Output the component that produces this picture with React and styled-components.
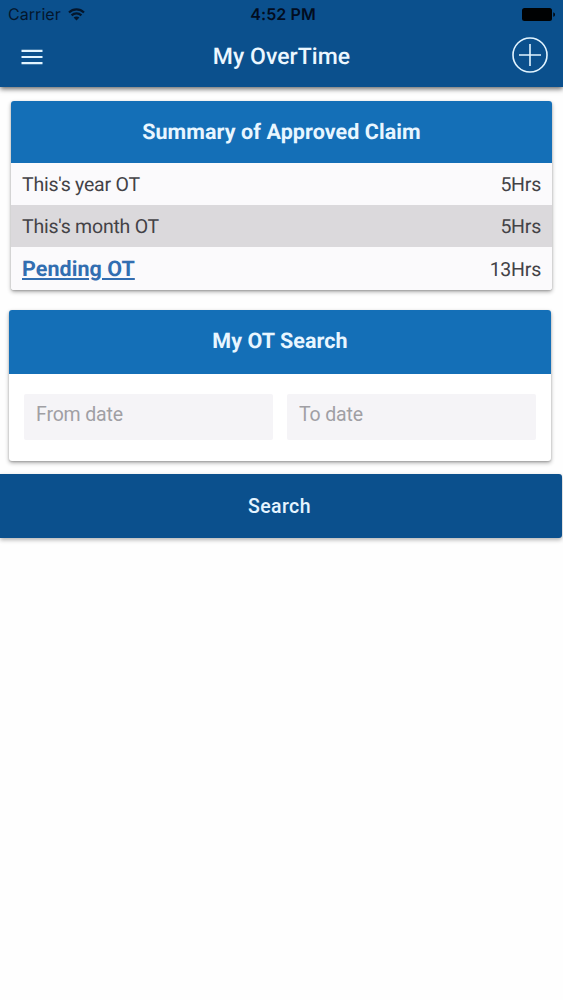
import React from "react";
import styled, { createGlobalStyle } from "styled-components";

const GlobalStyle = createGlobalStyle`
  * { box-sizing: border-box; }
  body { margin: 0; background: #fefefe; font-family: Roboto, sans-serif; text-rendering: geometricPrecision; }
  #root { min-height: 1000px; }
`;

const Screen = styled.div`
  width: 563px;
  min-height: 1000px;
  background: #fefefe;
  overflow: hidden;
`;

const Header = styled.header`
  height: 87px;
  background: #0b508d;
  box-shadow: 0 2px 5px rgba(0, 0, 0, 0.6);
`;

const StatusBar = styled.div`
  display: grid;
  grid-template-columns: 1fr auto 1fr;
  align-items: center;
  height: 28px;
  padding: 0 7px 0 8px;
  color: #04162c;
  font: 400 16px/28px Inter, sans-serif;
`;

const Carrier = styled.div`
  display: flex;
  align-items: center;
  gap: 7px;
  letter-spacing: 0.05px;
`;

const Clock = styled.div`
  padding-left: 2px;
  font-weight: 600;
  letter-spacing: 0.1px;
  color: #020d1f;
`;

const BatterySlot = styled.div`
  display: flex;
  justify-content: flex-end;
`;

const Toolbar = styled.div`
  display: grid;
  grid-template-columns: 100px 1fr 100px;
  align-items: center;
  height: 56px;
  padding: 0 15px 0 21px;
`;

const IconButton = styled.button`
  display: flex;
  padding: ${(p) => (p.$end ? "0 0 3px" : "2px 0 0")};
  border: 0;
  background: none;
  color: #e2f4ff;
  justify-self: ${(p) => (p.$end ? "end" : "start")};
`;

const Title = styled.h1`
  margin: 0;
  padding: 2px 6px 0 0;
  text-align: center;
  white-space: nowrap;
  color: #ecf7ff;
  font-size: 23px;
  line-height: 54px;
  font-weight: 500;
  letter-spacing: 0.05px;
`;

const Card = styled.section`
  width: ${(p) => p.$width}px;
  margin: ${(p) => p.$margin};
  border-radius: 3px;
  background: #fff;
  box-shadow: 0 2px 4px rgba(0, 0, 0, 0.3), 0 1px 2px rgba(0, 0, 0, 0.18);
`;

const CardHeading = styled.h2`
  margin: 0;
  padding-top: 1px;
  height: ${(p) => p.$height}px;
  border-radius: 3px 3px 0 0;
  background: #146fb7;
  color: #e8f6ff;
  text-align: center;
  font-size: 21.5px;
  line-height: 62px;
  font-weight: 700;
  letter-spacing: 0.08px;
`;

const Row = styled.div`
  display: flex;
  justify-content: space-between;
  height: ${(p) => p.$height || 42}px;
  padding: 1px 11px 0;
  background: ${(p) => (p.$shaded ? "#dbd9dc" : "#fbfafc")};
  color: #434246;
  font-size: 19.5px;
  line-height: 42px;
  letter-spacing: -0.23px;
  &:last-child { border-radius: 0 0 3px 3px; line-height: 44px; }
`;

const PendingLink = styled.a`
  color: #326eb1;
  font-size: 21.5px;
  line-height: 43px;
  font-weight: 700;
  letter-spacing: 0.05px;
  text-decoration: underline;
  text-decoration-thickness: 1.5px;
  text-underline-offset: 2px;
  text-decoration-skip-ink: auto;
`;

const DateFields = styled.div`
  display: flex;
  gap: 14px;
  height: 87px;
  padding: 20px 15px 21px;
`;

const DateField = styled.input`
  flex: 1;
  min-width: 0;
  height: 46px;
  padding: 0 11px 6px 12px;
  border: 0;
  border-radius: 2px;
  outline: 0;
  background: #f5f4f7;
  font: 400 19.5px Roboto, sans-serif;
  letter-spacing: -0.15px;
  &::placeholder { color: #a09fa4; opacity: 1; }
`;

const SearchButton = styled.button`
  display: block;
  width: 562px;
  height: 64px;
  margin: 13px 0 0;
  padding: 1px 3px 0 0;
  border: 0;
  border-radius: 0 3px 3px 0;
  background: #0b508d;
  color: #e5f4ff;
  font: 500 19.5px Roboto, sans-serif;
  letter-spacing: 0.4px;
  box-shadow: 0 2px 4px rgba(0, 0, 0, 0.3);
`;

const WifiIcon = () => (
  <svg width="17" height="13" viewBox="0 0 17 13" fill="none" stroke="currentColor" strokeWidth="2.2">
    <path d="M1 4.5C5.2.4 11.8.4 16 4.5M3.6 7.4c2.8-2.7 7-2.7 9.8 0" />
    <path d="M8.5 12.4 5.6 9.6c1.6-1.5 4.2-1.5 5.8 0Z" fill="currentColor" stroke="none" />
  </svg>
);

const BatteryIcon = () => (
  <svg width="34" height="13" viewBox="0 0 34 13" fill="#000203">
    <rect width="30" height="13" rx="2.5" />
    <path d="M31.3 4.2c2.2.8 2.2 3.8 0 4.6Z" />
  </svg>
);

const MenuIcon = () => (
  <svg width="22" height="16" viewBox="0 0 22 16" fill="currentColor">
    <path d="M.5.7h21v2.2H.5zM.5 6.9h21v2.2H.5zM.5 13h21v2.2H.5z" />
  </svg>
);

const AddIcon = () => (
  <svg width="36" height="36" viewBox="0 0 36 36" fill="none" stroke="currentColor" strokeWidth="1.6">
    <circle cx="18" cy="18" r="17" />
    <path d="M18 7v22M7 18h22" />
  </svg>
);

export default function App() {
  return (
    <Screen>
      <GlobalStyle />
      <Header>
        <StatusBar>
          <Carrier>Carrier <WifiIcon /></Carrier>
          <Clock>4:52 PM</Clock>
          <BatterySlot><BatteryIcon /></BatterySlot>
        </StatusBar>
        <Toolbar>
          <IconButton aria-label="Menu"><MenuIcon /></IconButton>
          <Title>My OverTime</Title>
          <IconButton $end aria-label="Add overtime"><AddIcon /></IconButton>
        </Toolbar>
      </Header>
      <Card $width={541} $margin="14px 0 0 11px">
        <CardHeading $height={62}>Summary of Approved Claim</CardHeading>
        <Row><span>This's year OT</span><span>5Hrs</span></Row>
        <Row $shaded><span>This's month OT</span><span>5Hrs</span></Row>
        <Row $height={43}><PendingLink>Pending OT</PendingLink><span>13Hrs</span></Row>
      </Card>
      <Card $width={542} $margin="20px 0 0 9px">
        <CardHeading $height={64}>My OT Search</CardHeading>
        <DateFields>
          <DateField placeholder="From date" />
          <DateField placeholder="To date" />
        </DateFields>
      </Card>
      <SearchButton>Search</SearchButton>
    </Screen>
  );
}
